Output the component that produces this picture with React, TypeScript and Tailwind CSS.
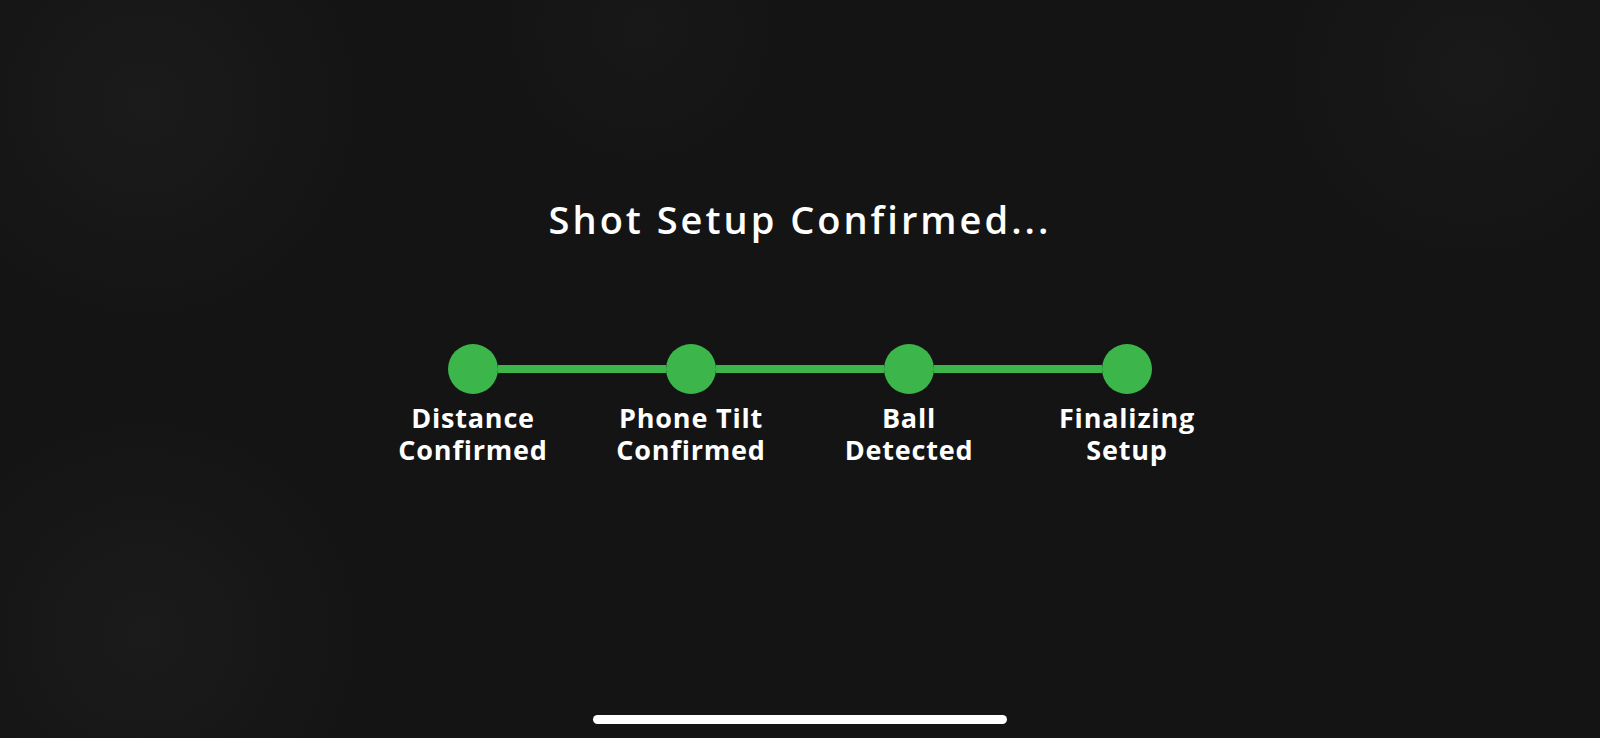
import React from 'react';

const steps = [
  ['Distance', 'Confirmed'],
  ['Phone Tilt', 'Confirmed'],
  ['Ball', 'Detected'],
  ['Finalizing', 'Setup'],
];

const Step = ({ lines, first, last }: { lines: string[]; first: boolean; last: boolean }) => {
  return (
    <div className="flex flex-col items-center">
      <div className="flex items-center w-full h-[50px]">
        <div className={`flex-1 h-2 ${first ? '' : 'bg-[#3cb64b]'}`} />
        <div className="w-[50px] h-[50px] rounded-full bg-[#3cb64b] shrink-0" />
        <div className={`flex-1 h-2 ${last ? '' : 'bg-[#3cb64b]'}`} />
      </div>
      <div className="mt-[8px] text-center text-white font-bold text-[27px] leading-[32px] tracking-[0.8px]">
        {lines.map((l) => (
          <div key={l}>{l}</div>
        ))}
      </div>
    </div>
  );
};

const App = () => {
  return (
    <div
      className="w-full h-screen overflow-hidden flex flex-col items-center bg-[#141414] bg-[radial-gradient(circle_at_9%_14%,#1b1b1b,transparent_14%),radial-gradient(circle_at_9%_86%,#1b1b1b,transparent_14%),radial-gradient(circle_at_92%_10%,#191919,transparent_12%),radial-gradient(circle_at_40%_4%,#181818,transparent_12%)]"
      style={{ fontFamily: '"Open Sans", "Noto Sans", sans-serif' }}
    >
      <h1 className="mt-[195px] text-white font-semibold text-[38px] leading-[48px] tracking-[3px]">
        Shot Setup Confirmed...
      </h1>

      <div className="mt-[101px] grid grid-cols-4 w-[872px]">
        {steps.map((s, i) => (
          <Step key={i} lines={s} first={i === 0} last={i === steps.length - 1} />
        ))}
      </div>

      <div className="mt-auto mb-[14px] w-[414px] h-[9px] rounded-full bg-white" />
    </div>
  );
};

export default App;
